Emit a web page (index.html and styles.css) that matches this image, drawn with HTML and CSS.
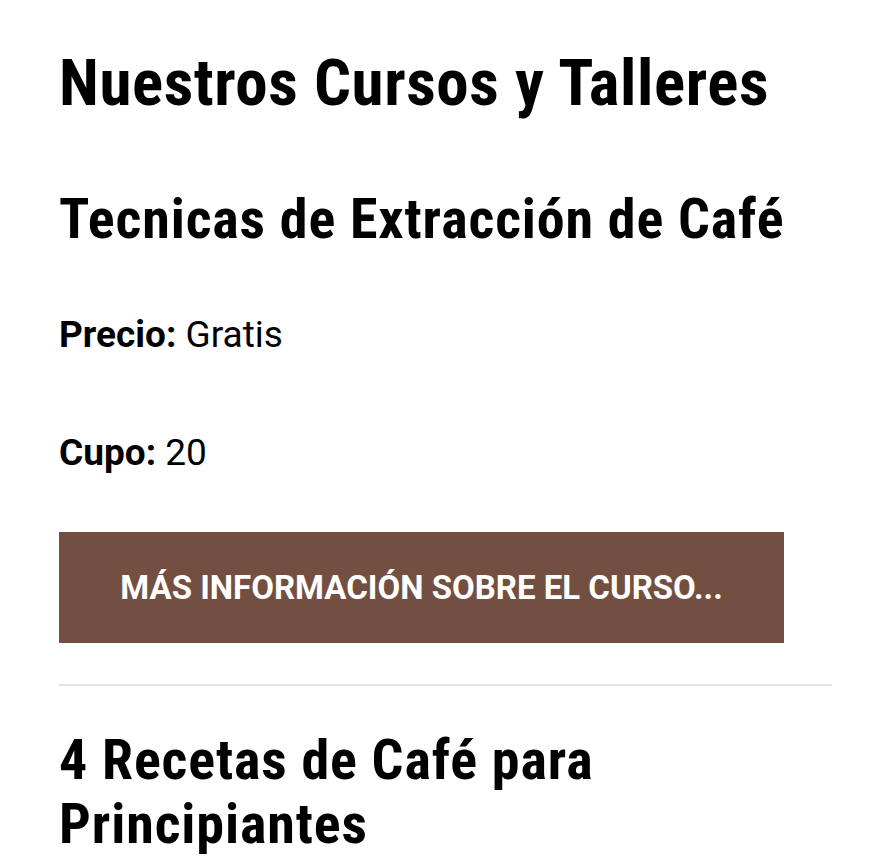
FILE: index.html
```html
<!DOCTYPE html>
<html lang="es">
<head>
<meta charset="utf-8">
<title>Nuestros Cursos y Talleres</title>
<link rel="stylesheet" href="styles.css">
</head>
<body>
<main class="page">
  <h1 class="page-title">Nuestros Cursos y Talleres</h1>
  <article class="course">
    <h2 class="course-title">Tecnicas de Extracción de Café</h2>
    <p class="course-meta meta-price"><strong>Precio:</strong> Gratis</p>
    <p class="course-meta meta-cupo"><strong>Cupo:</strong> 20</p>
    <a class="course-button" href="#">Más información sobre el curso...</a>
  </article>
  <hr class="divider">
  <article class="course">
    <h2 class="course-title next">4 Recetas de Café para Principiantes</h2>
  </article>
</main>
</body>
</html>
```

FILE: styles.css
```css
html, body {
  margin: 0;
  padding: 0;
  background: #ffffff;
}

.page {
  padding: 45px 40px 0 59px;
  font-family: Roboto, "Liberation Sans", sans-serif;
  color: #000000;
}

.page-title {
  margin: 0;
  font-family: "Roboto Condensed", Roboto, sans-serif;
  font-size: 65px;
  line-height: 76px;
  letter-spacing: 0.6px;
  font-weight: 700;
}

.course-title {
  margin: 65px 0 0;
  font-family: "Roboto Condensed", Roboto, sans-serif;
  font-size: 56px;
  line-height: 66px;
  letter-spacing: 0.9px;
  font-weight: 700;
}

.course-title.next {
  margin-top: 42px;
  line-height: 64px;
}

.course-meta {
  margin: 0;
  font-size: 37px;
  line-height: 44px;
}

.meta-price {
  margin-top: 61px;
}

.meta-cupo {
  margin-top: 74px;
}

.course-meta strong {
  font-weight: 700;
}

.course-button {
  display: inline-flex;
  align-items: center;
  justify-content: center;
  margin-top: 57px;
  width: 725px;
  height: 111px;
  box-sizing: border-box;
  background: #734f41;
  color: #ffffff;
  text-decoration: none;
  text-transform: uppercase;
  font-size: 33px;
  font-weight: 700;
}

.divider {
  margin: 41px 0 0;
  border: 0;
  height: 2px;
  background: #e3e3e3;
}
```
